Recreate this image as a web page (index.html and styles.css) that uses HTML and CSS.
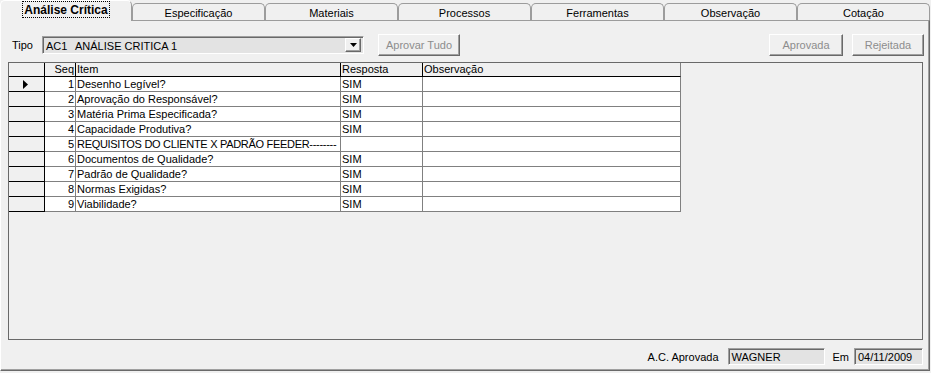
FILE: index.html
```html
<!DOCTYPE html>
<html lang="pt">
<head>
<meta charset="utf-8">
<title>Análise Crítica</title>
<link rel="stylesheet" href="styles.css">
</head>
<body>
<div class="window">
  <div class="tabs">
    <div class="tab active"><span>Análise Crítica</span></div>
    <div class="tab"><span>Especificação</span></div>
    <div class="tab"><span>Materiais</span></div>
    <div class="tab"><span>Processos</span></div>
    <div class="tab"><span>Ferramentas</span></div>
    <div class="tab"><span>Observação</span></div>
    <div class="tab last"><span>Cotação</span></div>
  </div>
  <div class="panel">
    <div class="toolbar">
      <span class="lbl-tipo">Tipo</span>
      <div class="combo">
        <span class="combo-text"><span class="code">AC1</span>ANÁLISE CRITICA 1</span>
        <span class="combo-btn"><svg width="7" height="4" viewBox="0 0 7 4"><path d="M0 0h7L3.5 4z" fill="#000"/></svg></span>
      </div>
      <button class="btn btn-all" disabled>Aprovar Tudo</button>
      <span class="spacer"></span>
      <button class="btn btn-ok" disabled>Aprovada</button>
      <button class="btn btn-rej" disabled>Rejeitada</button>
    </div>
    <div class="gridbox">
      <table class="grid">
        <colgroup>
          <col class="c-ind"><col class="c-seq"><col class="c-item"><col class="c-resp"><col class="c-obs">
        </colgroup>
        <thead>
          <tr><th class="ind"></th><th class="num">Seq</th><th>Item</th><th>Resposta</th><th class="lastcol">Observação</th></tr>
        </thead>
        <tbody>
          <tr><td class="ind"><svg width="5" height="9" viewBox="0 0 5 9"><path d="M0 0L5 4.5L0 9z" fill="#000"/></svg></td><td class="num">1</td><td>Desenho Legível?</td><td>SIM</td><td></td></tr>
          <tr><td class="ind"></td><td class="num">2</td><td>Aprovação do Responsável?</td><td>SIM</td><td></td></tr>
          <tr><td class="ind"></td><td class="num">3</td><td>Matéria Prima Especificada?</td><td>SIM</td><td></td></tr>
          <tr><td class="ind"></td><td class="num">4</td><td>Capacidade Produtiva?</td><td>SIM</td><td></td></tr>
          <tr><td class="ind"></td><td class="num">5</td><td class="tight">REQUISITOS DO CLIENTE X PADRÃO FEEDER--------</td><td></td><td></td></tr>
          <tr><td class="ind"></td><td class="num">6</td><td>Documentos de Qualidade?</td><td>SIM</td><td></td></tr>
          <tr><td class="ind"></td><td class="num">7</td><td>Padrão de Qualidade?</td><td>SIM</td><td></td></tr>
          <tr><td class="ind"></td><td class="num">8</td><td>Normas Exigidas?</td><td>SIM</td><td></td></tr>
          <tr><td class="ind"></td><td class="num">9</td><td>Viabilidade?</td><td>SIM</td><td></td></tr>
        </tbody>
      </table>
    </div>
    <div class="footer">
      <span class="lbl-aprov">A.C. Aprovada</span>
      <span class="field f-name">WAGNER</span>
      <span class="lbl-em">Em</span>
      <span class="field f-date">04/11/2009</span>
    </div>
  </div>
</div>
</body>
</html>
```
FILE: styles.css
```css
* { box-sizing: border-box; }

body {
  margin: 0;
  background: #f0f0f0;
  font-family: "Liberation Sans", Arial, sans-serif;
  font-size: 11px;
  color: #000;
  width: 931px;
  height: 373px;
  overflow: hidden;
}

.window {
  width: 931px;
}

/* Tabs */
.tabs {
  display: flex;
  height: 20px;
  align-items: flex-end;
}

.tab {
  width: 133px;
  height: 17px;
  border: 1px solid #9c9c9c;
  border-bottom: none;
  border-radius: 5px 5px 0 0;
  display: flex;
  align-items: center;
  justify-content: center;
  background: #f0f0f0;
  padding-top: 1px;
}

.tab.active {
  width: 132px;
  height: 21px;
  margin-bottom: -1px;
  position: relative;
  z-index: 1;
  font-weight: bold;
  font-size: 12px;
  border-color: #fff #9c9c9c #9c9c9c #fff;
  padding-top: 0;
  padding-bottom: 3px;
}

.tab.active span {
  outline: 1px dotted #000;
  outline-offset: 0;
  padding: 1px 1px 0;
  line-height: 14px;
}

/* Panel */
.panel {
  width: 930px;
  height: 351px;
  border-top: 1px solid #9c9c9c;
  border-left: 1px solid #fff;
  border-right: 1px solid #696969;
  border-bottom: 1px solid #696969;
  box-shadow: inset -1px -1px 0 #a0a0a0;
  padding: 0 5px 0 7px;
}

.toolbar {
  display: flex;
  align-items: center;
  height: 22px;
  margin-top: 13px;
  padding-left: 4px;
}

.lbl-tipo {
  width: 30px;
}

.combo {
  width: 322px;
  height: 18px;
  display: flex;
  align-items: center;
  background: #e3e3e3;
  border: 1px solid;
  border-color: #a0a0a0 #fff #fff #a0a0a0;
  box-shadow: inset 1px 1px 0 #696969;
  padding: 1px 2px 0 3px;
}

.combo-text {
  flex: 1;
  white-space: nowrap;
}

.combo-text .code {
  display: inline-block;
  width: 29px;
}

.combo-btn {
  width: 16px;
  height: 14px;
  background: #f0f0f0;
  border: 1px solid;
  border-color: #fff #696969 #696969 #fff;
  box-shadow: inset -1px -1px 0 #a0a0a0;
  display: flex;
  align-items: center;
  justify-content: center;
  margin-top: -1px;
}

.btn {
  height: 22px;
  font: inherit;
  color: #8d8d8d;
  background: #f0f0f0;
  border: 1px solid;
  border-color: #fff #696969 #696969 #fff;
  box-shadow: inset -1px -1px 0 #a0a0a0;
  padding: 0;
  border-radius: 0;
}

.btn-all { width: 82px; margin-left: 14px; }
.btn-ok { width: 74px; }
.btn-rej { width: 72px; margin-left: 9px; }

.spacer { flex: 1; }

/* Grid */
.gridbox {
  margin-top: 6px;
  width: 915px;
  height: 278px;
  border: 1px solid #696969;
  background: #f0f0f0;
}

.grid {
  table-layout: fixed;
  width: 672px;
  border-collapse: separate;
  border-spacing: 0;
  background: #fff;
}

.c-ind { width: 36px; }
.c-seq { width: 31px; }
.c-item { width: 265px; }
.c-resp { width: 82px; }
.c-obs { width: 258px; }

.grid th,
.grid td {
  padding: 0 0 0 1px;
  text-align: left;
  font-weight: normal;
  white-space: nowrap;
  overflow: hidden;
  vertical-align: middle;
}

.grid th {
  height: 14px;
  line-height: 13px;
  background: #f0f0f0;
  border-right: 1px solid #000;
  border-bottom: 1px solid #000;
}

.grid td {
  height: 15px;
  line-height: 14px;
  border-right: 1px solid #808080;
  border-bottom: 1px solid #808080;
}

.grid td.tight {
  letter-spacing: -0.3px;
}

.grid .num {
  text-align: right;
  padding: 0 1px 0 0;
}

.grid td.ind {
  background: #f0f0f0;
  border-right-color: #000;
  border-bottom-color: #000;
  padding: 0 0 0 14px;
}

.grid td.ind svg {
  display: block;
}

.grid th.lastcol {
  border-right-color: #808080;
}

/* Footer */
.footer {
  display: flex;
  justify-content: flex-end;
  align-items: center;
  height: 17px;
  margin-top: 8px;
  padding-right: 1px;
}

.lbl-aprov { margin-right: 9px; }
.lbl-em { margin: 0 5px 0 8px; }

.field {
  height: 17px;
  background: #e3e3e3;
  border: 1px solid;
  border-color: #a0a0a0 #fff #fff #a0a0a0;
  box-shadow: inset 1px 1px 0 #696969;
  padding: 1px 0 0 3px;
  line-height: 14px;
}

.f-name { width: 97px; }
.f-date { width: 69px; }
```
